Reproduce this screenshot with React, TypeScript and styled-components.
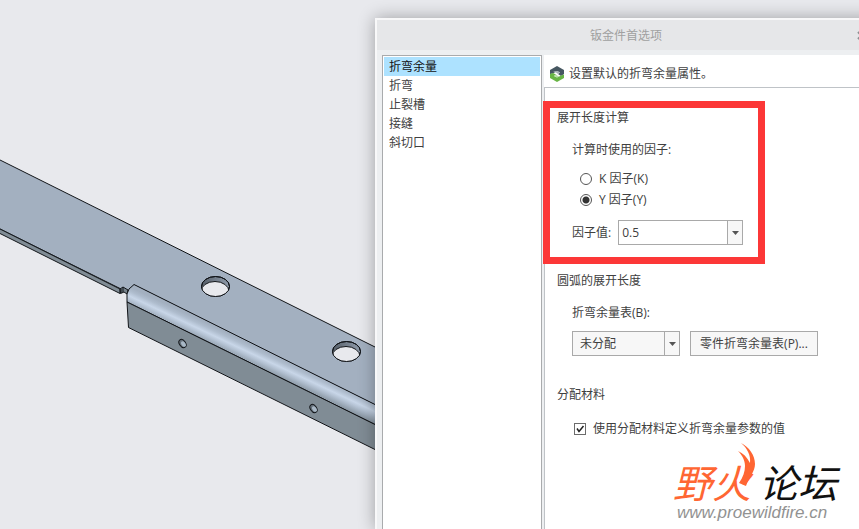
import React, { useState } from "react";
import styled, { createGlobalStyle } from "styled-components";

const GlobalStyle = createGlobalStyle`
  *, *::before, *::after { box-sizing: border-box; }
  body {
    margin: 0;
    background: #e8e9ed;
    color: #404040;
    font: 12px/18px "Open Sans", "Noto Sans CJK SC", sans-serif;
  }
  button, input, select { font: inherit; color: inherit; margin: 0; }
`;

const Workspace = styled.div`
  display: grid;
  grid-template-columns: 375px minmax(0, 1fr);
  height: 100vh;
  overflow: hidden;
`;

const Scene = styled.svg`
  display: block;
  width: 375px;
  height: 529px;
`;

const Dialog = styled.section`
  position: relative;
  display: flex;
  flex-direction: column;
  margin: 18px -18px 0 0;
  border: 2px solid #f8f8f9;
  border-bottom: 0;
  background: #edeff1;
  box-shadow: 0 0 16px rgba(0, 0, 0, 0.32);
`;

const TitleBar = styled.header`
  display: grid;
  grid-template-columns: 30px 1fr 30px;
  align-items: center;
  height: 30px;
  background: #e6e7e9;
  color: #a0a0a0;
`;

const DialogTitle = styled.h1`
  grid-column: 2;
  margin: 0;
  padding-top: 2px;
  font-size: 12px;
  font-weight: 400;
  text-align: center;
`;

const CloseButton = styled.button`
  display: flex;
  padding: 0 0 0 12px;
  border: 0;
  background: none;
`;

const DialogBody = styled.div`
  flex: 1;
  display: grid;
  grid-template-columns: 160px minmax(0, 1fr);
  gap: 2px;
  padding: 5px 5px 0;
`;

const CategoryList = styled.nav`
  padding: 1px;
  border: 1px solid #a9abad;
  border-bottom: 0;
  background: #fff;
`;

const Category = styled.button<{ $active: boolean }>`
  display: block;
  width: 100%;
  height: 19px;
  padding: 0 5px;
  border: 0;
  line-height: 19px;
  text-align: left;
  background: ${(p) => (p.$active ? "#ade2ff" : "transparent")};
  color: ${(p) => (p.$active ? "#111" : "#404040")};
`;

const Panel = styled.div`
  display: flex;
  flex-direction: column;
  background: #fff;
`;

const PanelHeader = styled.header`
  display: flex;
  align-items: center;
  gap: 4px;
  height: 33px;
  padding: 5px 5px 0;
  border-bottom: 1px solid #bfc3c7;
`;

const Form = styled.form`
  flex: 1;
  padding: 21px 12px 0;
  border-left: 1px solid #bfc3c7;
`;

const Section = styled.section<{ $space: number }>`
  position: relative;
  margin-bottom: ${(p) => p.$space}px;
`;

const Highlight = styled.div`
  position: absolute;
  inset: -8px auto -19px -14px;
  width: 222px;
  border: 7px solid #fc3737;
  pointer-events: none;
`;

const SectionTitle = styled.h2`
  margin: 0 0 14px;
  font-size: 12px;
  font-weight: 400;
`;

const Fields = styled.div`
  padding-left: 15px;
`;

const RadioGroup = styled.fieldset`
  margin: 0 0 10px;
  padding: 0;
  border: 0;
`;

const Legend = styled.legend`
  margin-bottom: 9px;
  padding: 0;
`;

const Choice = styled.label<{ $indent: number }>`
  display: flex;
  align-items: center;
  gap: 7px;
  height: 21px;
  padding-left: ${(p) => p.$indent}px;
`;

const Radio = styled.input`
  appearance: none;
  width: 12px;
  height: 12px;
  border: 1px solid #555;
  border-radius: 50%;
  background: #fff;
  &:checked { background: radial-gradient(circle, #333 0 3px, #fff 4px); }
`;

const CheckMark = styled.span`
  display: grid;
  width: 12px;
  height: 12px;
  > * { grid-area: 1 / 1; }
  svg { pointer-events: none; }
`;

const Checkbox = styled.input`
  appearance: none;
  width: 12px;
  height: 12px;
  border: 1px solid #6c6c6c;
  background: #fff;
  &:not(:checked) + svg { visibility: hidden; }
`;

const Row = styled.div<{ $gap: number }>`
  display: flex;
  align-items: center;
  gap: ${(p) => p.$gap}px;
`;

const TableLabel = styled.label`
  display: block;
  margin-bottom: 9px;
`;

const Combo = styled.div`
  display: flex;
  width: 125px;
  height: 25px;
  border: 1px solid #a9a9a9;
  background: #fff;
`;

const ComboInput = styled.input`
  flex: 1;
  min-width: 0;
  padding: 0 3px;
  border: 0;
  outline: 0;
  background: none;
`;

const ComboArrow = styled.button`
  display: grid;
  place-items: center;
  width: 15px;
  padding: 0;
  border: 0;
  border-left: 1px solid #a9a9a9;
  background: #f7f7f7;
`;

const SelectBox = styled.div`
  display: grid;
  grid-template-columns: 1fr 16px;
  width: 108px;
  height: 25px;
`;

const Select = styled.select`
  grid-area: 1 / 1 / 2 / 3;
  appearance: none;
  padding: 0 20px 0 7px;
  border: 1px solid #a9a9a9;
  border-radius: 0;
  background: #f7f7f7;
`;

const SelectArrow = styled.span`
  grid-area: 1 / 2;
  display: grid;
  place-items: center;
  border-left: 1px solid #a9a9a9;
  pointer-events: none;
  z-index: 1;
`;

const PushButton = styled.button`
  height: 25px;
  min-width: 128px;
  padding: 0 8px;
  border: 1px solid #a9a9a9;
  background: #f7f7f7;
`;

const Watermark = styled.div`
  position: absolute;
  right: 28px;
  bottom: 7px;
  width: 174px;
  pointer-events: none;
`;

const Brand = styled.div`
  display: flex;
  gap: 8px;
  margin-bottom: 3px;
  font: italic 400 39px/40px "Noto Sans CJK SC", sans-serif;
  color: #111;
`;

const BrandAccent = styled.span`
  color: #ff6633;
`;

const Flame = styled.svg`
  position: absolute;
  left: 64px;
  top: -18px;
  width: 20px;
  height: 44px;
`;

const SiteAddress = styled.div`
  padding-left: 4px;
  font: italic 17px/18px "Liberation Sans", sans-serif;
  color: #929292;
`;

const Arrow = () => (
  <svg width="7" height="4" viewBox="0 0 7 4" aria-hidden="true">
    <path d="M0 0H7L3.5 4Z" fill="#555" />
  </svg>
);

const PartView = () => (
  <Scene viewBox="0 0 375 529" aria-hidden="true">
    <defs>
      <linearGradient id="bend" gradientUnits="userSpaceOnUse" x1="300" y1="367" x2="292" y2="384">
        <stop offset="0" stopColor="#a3b0c0" />
        <stop offset="0.2" stopColor="#aebccd" />
        <stop offset="0.45" stopColor="#c8d6e8" />
        <stop offset="0.65" stopColor="#b2c0d1" />
        <stop offset="1" stopColor="#8996a2" />
      </linearGradient>
      <linearGradient id="bore" x1="0" x2="1">
        <stop offset="0" stopColor="#555e68" />
        <stop offset="1" stopColor="#909cab" />
      </linearGradient>
      <clipPath id="rim">
        <ellipse cx="0" cy="0" rx="14" ry="10" />
      </clipPath>
    </defs>
    <g stroke="#111418" strokeWidth="1">
      <path d="M-2 159L377 348V406L134 285L128 291L121 289L-2 228Z" fill="#a3b0c0" />
      <path d="M-2 228L120 289V293.500L-2 232.500Z" fill="#808c95" />
      <path d="M120 289L123 287L128 290L127 294L124 292L120.500 293.500Z" fill="#77838c" />
      <path d="M123 287V292M121 289V293" fill="none" />
      <path d="M134 284.500L377 405.500V425.500L127 302V294L129 289Z" fill="url(#bend)" />
      <path d="M127 302L377 425.500V450.500L128.500 327.500Z" fill="#808c95" />
      {[
        [215.5, 286.5],
        [346.5, 351.5],
      ].map(([x, y]) => (
        <g key={x} transform={`translate(${x} ${y})`}>
          <ellipse rx="14" ry="10" fill="url(#bore)" />
          <g clipPath="url(#rim)">
            <ellipse cx="-0.500" cy="5" rx="14" ry="10" fill="#e8e9ed" />
          </g>
          <ellipse rx="14" ry="10" fill="none" />
        </g>
      ))}
      {[
        [182.5, 343.5],
        [313.5, 408.5],
      ].map(([x, y]) => (
        <g key={x} transform={`translate(${x} ${y}) rotate(-35)`}>
          <ellipse rx="3" ry="4.500" fill="#66717b" />
          <ellipse cx="0.500" cy="1" rx="2" ry="3" fill="#a9b8c6" stroke="none" />
        </g>
      ))}
    </g>
  </Scene>
);

const categories = ["折弯余量", "折弯", "止裂槽", "接缝", "斜切口"];

export default function App() {
  const [category, setCategory] = useState(categories[0]);
  const [factor, setFactor] = useState("Y");
  const [value, setValue] = useState("0.5");
  const [useMaterial, setUseMaterial] = useState(true);

  return (
    <>
      <GlobalStyle />
      <Workspace>
        <PartView />
        <Dialog role="dialog" aria-labelledby="dialog-title">
          <TitleBar>
            <DialogTitle id="dialog-title">钣金件首选项</DialogTitle>
            <CloseButton type="button" aria-label="关闭">
              <svg width="9" height="9" viewBox="0 0 9 9">
                <path d="M1 1L8 8M8 1L1 8" stroke="#8c8f92" strokeWidth="2" />
              </svg>
            </CloseButton>
          </TitleBar>
          <DialogBody>
            <CategoryList>
              {categories.map((name) => (
                <Category key={name} type="button" $active={name === category} onClick={() => setCategory(name)}>
                  {name}
                </Category>
              ))}
            </CategoryList>
            <Panel>
              <PanelHeader>
                <svg width="16" height="16" viewBox="0 0 16 16" aria-hidden="true">
                  <path d="M8 0L15 4V8L12 10L9 8L11 6.500L8 5L4 7.500L1 8V4Z" fill="#465761" />
                  <path d="M4 6C6 4.500 9 4.500 11 6.500L9 8L7 6.500Z" fill="#a5b0b5" />
                  <path d="M8 16L1 12V8L4 7L7 8.500L5 10L8 11.500L12 9.500L15 8.500V12Z" fill="#68b545" />
                  <path d="M5 10L7 8.500L9 10L11 10C9 11.500 7 11.500 5 10Z" fill="#b7dea6" />
                </svg>
                <span>设置默认的折弯余量属性。</span>
              </PanelHeader>
              <Form onSubmit={(e) => e.preventDefault()}>
                <Section $space={27}>
                  <SectionTitle>展开长度计算</SectionTitle>
                  <Fields>
                    <RadioGroup>
                      <Legend>计算时使用的因子:</Legend>
                      {["K", "Y"].map((k) => (
                        <Choice key={k} $indent={8}>
                          <Radio type="radio" name="factor" checked={factor === k} onChange={() => setFactor(k)} />
                          {k} 因子({k})
                        </Choice>
                      ))}
                    </RadioGroup>
                    <Row $gap={7}>
                      <label htmlFor="factor-value">因子值:</label>
                      <Combo>
                        <ComboInput id="factor-value" value={value} onChange={(e) => setValue(e.target.value)} />
                        <ComboArrow type="button" aria-label="选择因子值">
                          <Arrow />
                        </ComboArrow>
                      </Combo>
                    </Row>
                  </Fields>
                  <Highlight />
                </Section>
                <Section $space={30}>
                  <SectionTitle>圆弧的展开长度</SectionTitle>
                  <Fields>
                    <TableLabel htmlFor="bend-table">折弯余量表(B):</TableLabel>
                    <Row $gap={10}>
                      <SelectBox>
                        <Select id="bend-table">
                          <option>未分配</option>
                        </Select>
                        <SelectArrow>
                          <Arrow />
                        </SelectArrow>
                      </SelectBox>
                      <PushButton type="button">零件折弯余量表(P)...</PushButton>
                    </Row>
                  </Fields>
                </Section>
                <Section $space={0}>
                  <SectionTitle>分配材料</SectionTitle>
                  <Fields>
                    <Choice $indent={2}>
                      <CheckMark>
                        <Checkbox
                          type="checkbox"
                          checked={useMaterial}
                          onChange={(e) => setUseMaterial(e.target.checked)}
                        />
                        <svg width="12" height="12" viewBox="0 0 12 12" aria-hidden="true">
                          <path d="M3 5.500L5 8.500L9.500 3" fill="none" stroke="#222" strokeWidth="1.500" />
                        </svg>
                      </CheckMark>
                      使用分配材料定义折弯余量参数的值
                    </Choice>
                  </Fields>
                </Section>
              </Form>
            </Panel>
          </DialogBody>
          <Watermark>
            <Brand>
              <BrandAccent>野火</BrandAccent>
              <span>论坛</span>
            </Brand>
            <Flame viewBox="0 0 20 44" aria-hidden="true">
              <path
                d="M4 0C12 4 18 12 18 21C18 29 12 34 9 43L2 40C6 34 8 29 8 23C8 17 5 12 1 8C6 10 10 14 13 20C14 12 10 5 4 0Z"
                fill="#ff6633"
              />
            </Flame>
            <SiteAddress>www.proewildfire.cn</SiteAddress>
          </Watermark>
        </Dialog>
      </Workspace>
    </>
  );
}
